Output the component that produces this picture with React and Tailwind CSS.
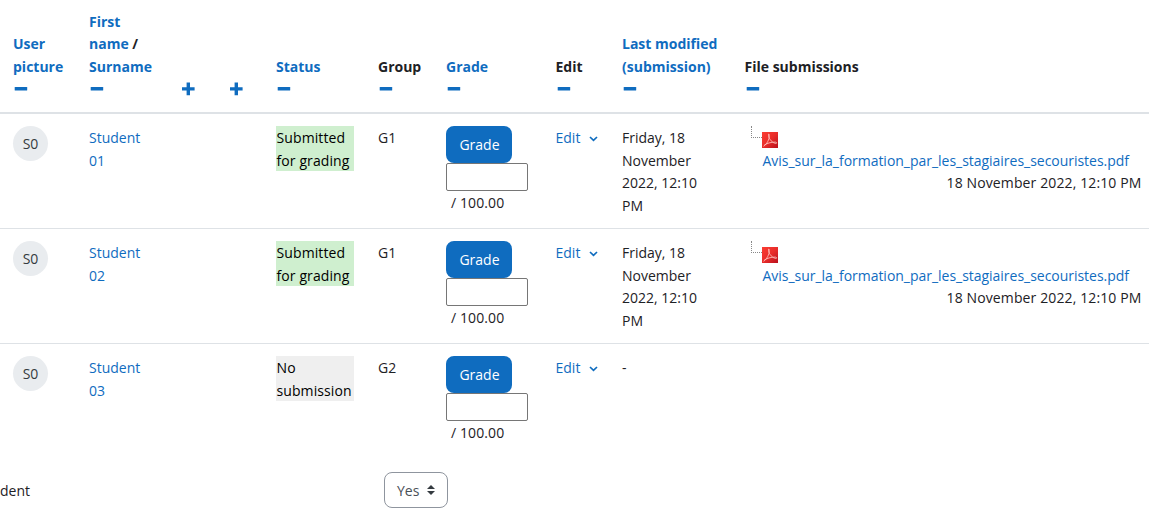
import React from "react";

const students = [
  {
    name: ["Student", "01"],
    status: ["Submitted", "for grading"],
    submitted: true,
    group: "G1",
    modified: ["Friday, 18", "November", "2022, 12:10", "PM"],
    file: "Avis_sur_la_formation_par_les_stagiaires_secouristes.pdf",
    date: "18 November 2022, 12:10 PM",
  },
  {
    name: ["Student", "02"],
    status: ["Submitted", "for grading"],
    submitted: true,
    group: "G1",
    modified: ["Friday, 18", "November", "2022, 12:10", "PM"],
    file: "Avis_sur_la_formation_par_les_stagiaires_secouristes.pdf",
    date: "18 November 2022, 12:10 PM",
  },
  {
    name: ["Student", "03"],
    status: ["No", "submission"],
    submitted: false,
    group: "G2",
    modified: ["-"],
  },
];

const columns =
  "grid grid-cols-[76px_93px_48px_46px_102px_68px_109.5px_66.5px_122.5px_405px] pl-[13px]";

const Lines = ({ items }) =>
  items.map((item) => (
    <div key={item} className="whitespace-nowrap">
      {item}
    </div>
  ));

const Minus = () => (
  <svg className="block w-[15px] h-[22px] text-[#0f6cbf]" viewBox="0 0 15 22">
    <rect x="1.7" y="9" width="12.5" height="3.6" rx="0.6" fill="currentColor" />
  </svg>
);

const Plus = () => (
  <svg className="block w-[15px] h-[22px] text-[#0f6cbf]" viewBox="0 0 15 22">
    <path
      d="M0 9.2h4.6V4.6h3.4v4.6h4.6v3.4H8v4.6H4.6v-4.6H0z"
      fill="currentColor"
    />
  </svg>
);

const Heading = ({ items, link }) => (
  <div className={link ? "text-[#0f6cbf]" : ""}>
    <Lines items={items} />
    <Minus />
  </div>
);

const PdfIcon = () => (
  <svg className="block w-4 h-4" viewBox="0 0 16 16">
    <defs>
      <linearGradient id="pdf" x1="0" y1="0" x2="1" y2="1">
        <stop offset="0" stopColor="#fb3d32" />
        <stop offset="0.5" stopColor="#e92d2a" />
        <stop offset="1" stopColor="#b9101c" />
      </linearGradient>
    </defs>
    <rect width="16" height="16" fill="url(#pdf)" />
    <path
      d="M1.5 14.3C4.5 12.6 7.6 7.5 7.2 3.2 7.1 1 6.2 1.8 6.6 3.8 7.2 7.5 10.5 11 13.8 11.4c1.4.1 1.2-1.2-.4-1.3C9.5 9.8 4 11.6 2 13.4"
      fill="none"
      stroke="#ffc9c4"
      strokeWidth="0.8"
    />
  </svg>
);

const Submission = ({ file, date }) => (
  <div className="pl-[6px] w-[397px]">
    <div className="flex h-6">
      <div className="w-[11px] h-[12px] border-l border-b border-dotted border-[#888]" />
      <div className="pt-[6px]">
        <PdfIcon />
      </div>
    </div>
    <div className="h-[22px] pl-3 text-[#0f6cbf] tracking-[-0.025px] whitespace-nowrap">
      {file}
    </div>
    <div className="text-right tracking-[0.12px] whitespace-nowrap">{date}</div>
  </div>
);

const StudentRow = ({ student, first }) => (
  <div
    className={`${columns} ${first ? "h-[114px] pt-3" : "h-[115px] pt-3 border-t border-[#dee2e6]"}`}
  >
    <div>
      <div className="w-[35px] h-[35px] pt-[2px] rounded-full bg-[#e9ecef] text-[#343a40] flex items-center justify-center">
        S0
      </div>
    </div>
    <div className="pt-px text-[#0f6cbf]">
      <Lines items={student.name} />
    </div>
    <div />
    <div />
    <div>
      <div
        className={`w-[78px] h-[45px] pt-px pl-[0.5px] text-black tracking-[0.1px] ${student.submitted ? "bg-[#cfefcf]" : "bg-[#efefef]"}`}
      >
        <Lines items={student.status} />
      </div>
    </div>
    <div className="pt-px">{student.group}</div>
    <div>
      <button className="block w-[66px] h-[37px] pt-[2px] pl-px rounded-lg bg-[#0f6cbf] text-white">
        Grade
      </button>
      <input className="block w-[82px] h-7 border border-[#767676] rounded-[2px] bg-white" />
      <div className="pl-[5px] pt-px tracking-[0.1px]">/ 100.00</div>
    </div>
    <div className="flex h-[24.5px] items-center gap-[9px] text-[#0f6cbf]">
      Edit
      <svg className="w-[9px] h-[6px] mt-px" viewBox="0 0 9 6">
        <path
          d="M1 1l3.5 3.3L8 1"
          fill="none"
          stroke="currentColor"
          strokeWidth="1.7"
        />
      </svg>
    </div>
    <div className="pt-px">
      <Lines items={student.modified} />
    </div>
    {student.file && <Submission file={student.file} date={student.date} />}
  </div>
);

export default function App() {
  return (
    <div className="w-[1149px] h-[524px] overflow-hidden bg-white text-[#1d2125] font-['Open_Sans',sans-serif] text-[14px] leading-[22.5px]">
      <div
        className={`${columns} h-[114px] pb-3 items-end font-bold border-b-2 border-[#dee2e6]`}
      >
        <Heading items={["User", "picture"]} link />
        <div className="text-[#0f6cbf]">
          <div>First</div>
          <div>
            name <span className="text-[#1d2125]">/</span>
          </div>
          <div>Surname</div>
          <Minus />
        </div>
        <Plus />
        <Plus />
        <Heading items={["Status"]} link />
        <Heading items={["Group"]} />
        <Heading items={["Grade"]} link />
        <Heading items={["Edit"]} />
        <Heading items={["Last modified", "(submission)"]} link />
        <Heading items={["File submissions"]} />
      </div>
      {students.map((student, i) => (
        <StudentRow key={student.name[1]} student={student} first={i === 0} />
      ))}
      <div className="flex items-center h-9 mt-[14px]">
        <div className="w-[384px] pt-[2px]">dent</div>
        <div className="w-16 h-9 pl-3 flex items-center gap-2 border border-[#8f959e] rounded-lg text-[#495057]">
          <span className="pt-[2px]">Yes</span>
          <svg className="w-2 h-[10px]" viewBox="0 0 8 10">
            <path d="M0 4l4-4 4 4zM0 6h8l-4 4z" fill="#343a40" />
          </svg>
        </div>
      </div>
    </div>
  );
}
